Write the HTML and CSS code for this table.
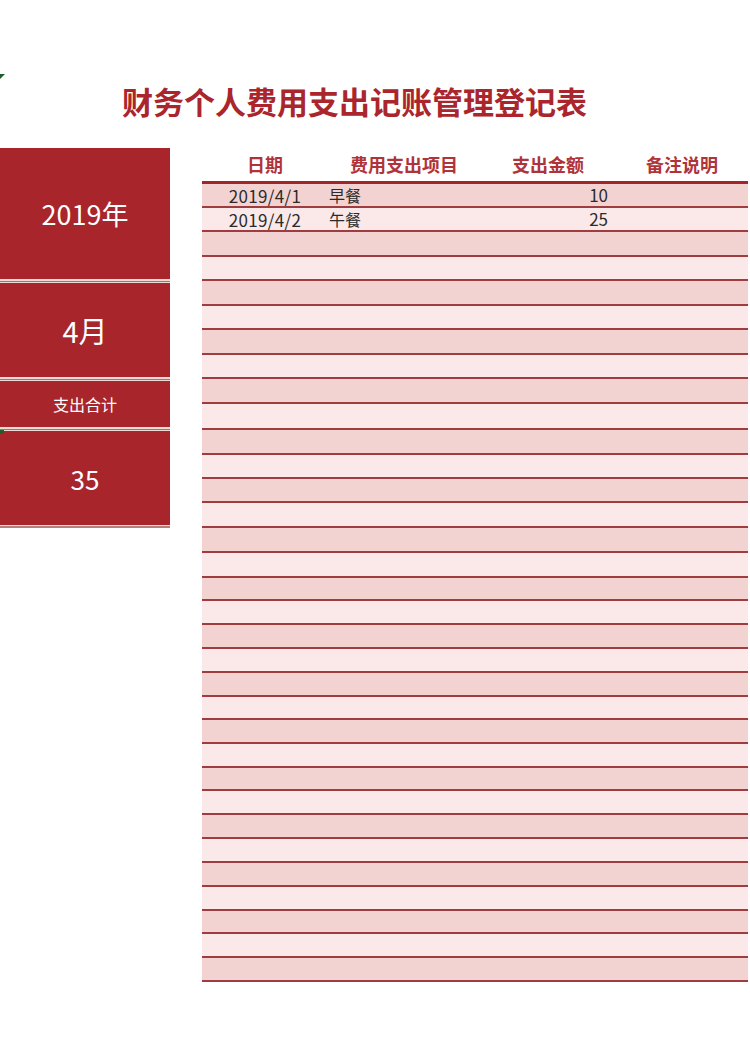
FILE: index.html
```html
<!DOCTYPE html>
<html lang="zh">
<head>
<meta charset="utf-8">
<title>财务个人费用支出记账管理登记表</title>
<link rel="stylesheet" href="styles.css">
</head>
<body>
<div class="sheet">
  <span class="mark mark-top"></span>
  <span class="mark mark-mid"></span>
  <h1 class="title">财务个人费用支出记账管理登记表</h1>
  <div class="main">
    <aside class="panel">
      <div class="block block-year">2019年</div>
      <div class="sep"></div>
      <div class="block block-month">4月</div>
      <div class="sep"></div>
      <div class="block block-label">支出合计</div>
      <div class="sep"></div>
      <div class="block block-total">35</div>
      <div class="sep sep-end"></div>
    </aside>
    <section class="table">
      <div class="head">
        <div class="c-date">日期</div>
        <div class="c-item">费用支出项目</div>
        <div class="c-amt">支出金额</div>
        <div class="c-note">备注说明</div>
      </div>
      <div class="rows">
        <div class="row"><div class="c-date">2019/4/1</div><div class="c-item">早餐</div><div class="c-amt">10</div><div class="c-note"></div></div>
        <div class="row"><div class="c-date">2019/4/2</div><div class="c-item">午餐</div><div class="c-amt">25</div><div class="c-note"></div></div>
        <div class="row"></div><div class="row"></div><div class="row"></div><div class="row"></div>
        <div class="row"></div><div class="row"></div><div class="row"></div><div class="row"></div>
        <div class="row"></div><div class="row"></div><div class="row"></div><div class="row"></div>
        <div class="row"></div><div class="row"></div><div class="row"></div><div class="row"></div>
        <div class="row"></div><div class="row"></div><div class="row"></div><div class="row"></div>
        <div class="row"></div><div class="row"></div><div class="row"></div><div class="row"></div>
        <div class="row"></div><div class="row"></div><div class="row"></div><div class="row"></div>
        <div class="row"></div><div class="row"></div><div class="row"></div>
      </div>
    </section>
  </div>
</div>
</body>
</html>
```

FILE: styles.css
```css
* { box-sizing: border-box; }
html, body { margin: 0; padding: 0; background: #ffffff; }
body {
  font-family: "Noto Sans CJK SC", "Noto Sans", sans-serif;
  color: #333;
}
.sheet {
  position: relative;
  width: 750px;
  height: 1058px;
}
.mark {
  position: absolute;
  left: 0;
  background: #1f5e2a;
}
.mark-top {
  top: 74px;
  width: 5px;
  height: 5px;
  clip-path: polygon(0 0, 100% 0, 0 100%);
}
.mark-mid {
  top: 430px;
  width: 4px;
  height: 4px;
}
.title {
  margin: 0 0 26px 0;
  padding: 80px 0 0 122px;
  height: 122px;
  font-size: 31px;
  line-height: 42px;
  font-weight: 700;
  color: #aa262c;
  letter-spacing: 0;
}
.main {
  display: flex;
  gap: 32px;
}
.panel {
  width: 170px;
  display: flex;
  flex-direction: column;
}
.block {
  background: #a8262b;
  color: #ffffff;
  display: flex;
  align-items: center;
  justify-content: center;
}
.block-year { height: 131px; font-size: 27px; }
.block-month { height: 94px; font-size: 29px; }
.block-label { height: 46px; font-size: 16px; }
.block-total { height: 94px; font-size: 26px; }
.sep {
  height: 4px;
  background: linear-gradient(#eddad4 0 2px, #b86c6a 2px 3px, #eddad4 3px);
}
.sep-end {
  height: 3px;
  background: linear-gradient(#eddad4 0 1px, #b3807c 1px 3px);
}
.table {
  width: 546px;
}
.head, .row {
  display: grid;
  grid-template-columns: 126px 152px 136px 132px;
}
.head {
  height: 36px;
  border-bottom: 3px solid #a0262b;
  align-items: center;
  font-size: 18px;
  font-weight: 700;
  color: #b0333a;
  text-align: center;
  padding-bottom: 2px;
}
.row {
  height: 24px;
  border-bottom: 2px solid #9f3c40;
  align-items: center;
  font-size: 16px;
  line-height: 20px;
  color: #2b2b2b;
}
.row:nth-child(odd) { background: #f3d3d2; }
.row:nth-child(even) { background: #fae9e8; }
.row:nth-child(3), .row:nth-child(5), .row:nth-child(7),
.row:nth-child(9), .row:nth-child(11), .row:nth-child(14),
.row:nth-child(15), .row:nth-child(16) { height: 25px; }
.row:nth-child(10) { height: 26px; }
.row:nth-child(17), .row:nth-child(22), .row:nth-child(25), .row:nth-child(31) { height: 23px; }
.row .c-date { text-align: center; padding-top: 1px; font-size: 17px; letter-spacing: 0.3px; }
.row .c-item { padding-left: 1px; }
.row .c-amt { text-align: right; padding-right: 8px; font-size: 17px; }
```
